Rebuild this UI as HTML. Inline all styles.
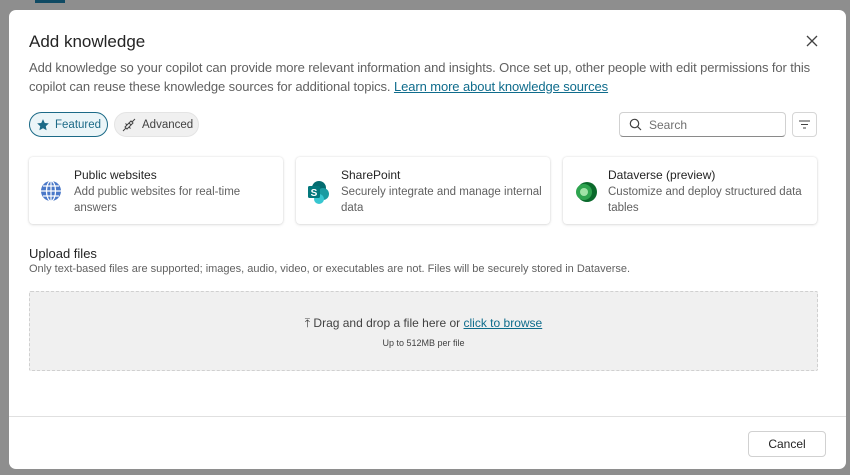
<!DOCTYPE html>
<html><head><style>
*{box-sizing:border-box;margin:0;padding:0}
body{width:850px;height:475px;background:#8e8e8e;font-family:"Liberation Sans",sans-serif;position:relative;overflow:hidden;color:#242424}
.tab{position:absolute;left:35px;top:0;width:30px;height:3px;background:#0f4a63}
.dlg{position:absolute;left:9px;top:10px;width:837px;height:459px;background:#fff;border-radius:7px}
h1{position:absolute;left:20px;top:22px;font-size:17px;font-weight:normal;color:#242424}
.x{position:absolute;left:797px;top:25px}
.desc{position:absolute;left:20px;top:48px;width:785px;font-size:13px;line-height:19px;color:#616161;letter-spacing:-0.1px}
.desc a{color:#0f6c8c;text-decoration:underline}
.pill{position:absolute;top:102px;height:25px;border-radius:13px;font-size:11.5px;display:flex;align-items:center;padding:0 6px 0 6px;gap:5px;white-space:nowrap}
.pill svg{flex-shrink:0}
.p1{left:20px;width:79px;border:1px solid #1c6a87;background:#ebf5f8;color:#1c6a87}
.p2{left:105px;width:85px;background:#f0f0f0;border:1px solid #e4e4e4;color:#424242}
.search{position:absolute;left:610px;top:102px;width:167px;height:25px;border:1px solid #d1d1d1;border-bottom-color:#8a8a8a;border-radius:4px;font-size:12px;color:#707070;display:flex;align-items:center;padding-left:9px;gap:7px}
.flt{position:absolute;left:783px;top:102px;width:25px;height:25px;border:1px solid #d6d6d6;border-radius:4px}
.card{position:absolute;top:147px;width:254px;height:67px;background:#fff;border-radius:4px;box-shadow:0 0 2px rgba(0,0,0,.12),0 1px 3px rgba(0,0,0,.1)}
.card .ic{position:absolute;left:11px;top:23px}
.card b{position:absolute;left:45px;top:11px;font-weight:normal;font-size:12px;color:#242424}
.card p{position:absolute;left:45px;top:27px;width:205px;font-size:11.5px;line-height:16px;color:#616161}
.up{position:absolute;left:20px;top:236px;font-size:13px;color:#242424}
.up2{position:absolute;left:20px;top:253px;font-size:11px;color:#616161}
.drop{position:absolute;left:20px;top:281px;width:789px;height:80px;background:#f0f0f0;border:1px dashed #d0d0d0;border-radius:2px;text-align:center}
.drop .a{margin-top:24px;font-size:12px;color:#424242}
.drop .a a{color:#0f6c8c;text-decoration:underline}
.drop .b{margin-top:7px;font-size:9px;color:#424242}
.hr{position:absolute;left:0;top:406px;width:837px;height:1px;background:#e0e0e0}
.cancel{position:absolute;left:739px;top:421px;width:78px;height:26px;border:1px solid #d1d1d1;border-radius:4px;font-size:12px;display:flex;align-items:center;justify-content:center}
</style></head><body>
<div class="tab"></div>
<div class="dlg">
<h1>Add knowledge</h1>
<svg class="x" width="12" height="12" viewBox="0 0 12 12"><path d="M1 1L11 11M11 1L1 11" stroke="#424242" stroke-width="1.3"/></svg>
<div class="desc">Add knowledge so your copilot can provide more relevant information and insights. Once set up, other people with edit permissions for this copilot can reuse these knowledge sources for additional topics. <a>Learn more about knowledge sources</a></div>
<div class="pill p1"><svg width="14" height="14" viewBox="0 0 24 24"><path d="M12 2l3 6.5 7 .8-5.2 4.8 1.4 7L12 17.6 5.8 21.1l1.4-7L2 9.3l7-.8z" fill="#1c6a87"/></svg>Featured</div>
<div class="pill p2"><svg width="16" height="16" viewBox="0 0 16 16" fill="none" stroke="#424242" stroke-width="1"><path d="M2 14l3-3M14 2l-3 3M5 11l-1-1 4-4 2 2-4 4zM8 6l2-2 2 2-2 2M6 8l-1.5-1.5M8 10l1.5 1.5"/></svg>Advanced</div>
<div class="search"><svg width="13" height="13" viewBox="0 0 13 13" fill="none" stroke="#424242" stroke-width="1.2"><circle cx="5.5" cy="5.5" r="4.2"/><path d="M8.5 8.5L12 12"/></svg>Search</div>
<div class="flt"><svg width="23" height="23" viewBox="0 0 23 23" stroke="#424242" stroke-width="1.1"><path d="M6 8h11M8 11.5h7M10 15h3"/></svg></div>
<div class="card" style="left:20px"><svg class="ic" width="22" height="22" viewBox="0 0 22 22"><circle cx="11" cy="11" r="10" fill="#4a78c8"/><path d="M1 11h20M11 1v20M3 6h16M3 16h16" stroke="#fff" stroke-width="1.2"/><ellipse cx="11" cy="11" rx="4.5" ry="10" fill="none" stroke="#fff" stroke-width="1.2"/></svg><b>Public websites</b><p>Add public websites for real-time answers</p></div>
<div class="card" style="left:287px"><svg class="ic" width="24" height="24" viewBox="0 0 24 24"><circle cx="12" cy="8" r="7" fill="#036c70"/><circle cx="16" cy="14" r="6" fill="#1a9ba1"/><circle cx="12" cy="19" r="5" fill="#37c6d0"/><rect x="1" y="6" width="12" height="12" rx="1.5" fill="#03787c"/><text x="7" y="16" font-size="10" fill="#fff" text-anchor="middle" font-family="Liberation Sans" font-weight="bold">S</text></svg><b>SharePoint</b><p>Securely integrate and manage internal data</p></div>
<div class="card" style="left:554px"><svg class="ic" width="24" height="24" viewBox="0 0 24 24"><ellipse cx="13" cy="12" rx="10" ry="10" fill="#0b6a2c"/><circle cx="10" cy="12" r="8" fill="#2ea44f"/><circle cx="10" cy="12" r="4" fill="#9fe3a6"/></svg><b>Dataverse (preview)</b><p>Customize and deploy structured data tables</p></div>
<div class="up">Upload files</div>
<div class="up2">Only text-based files are supported; images, audio, video, or executables are not. Files will be securely stored in Dataverse.</div>
<div class="drop"><div class="a">⤒ Drag and drop a file here or <a>click to browse</a></div><div class="b">Up to 512MB per file</div></div>
<div class="hr"></div>
<div class="cancel">Cancel</div>
</div>
</body></html>
